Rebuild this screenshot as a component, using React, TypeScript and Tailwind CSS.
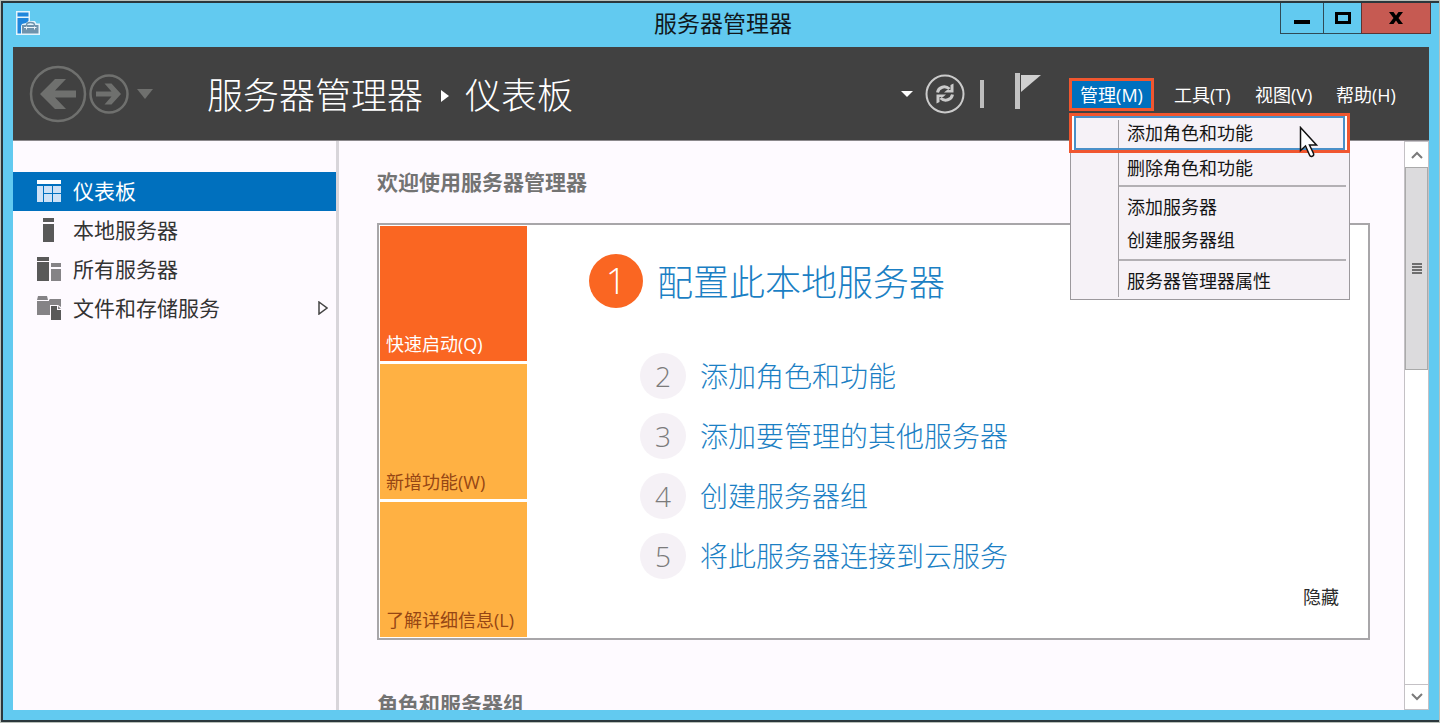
import React, { useState } from "react";

const navItems = [
  { label: "仪表板", icon: <DashboardIcon /> },
  { label: "本地服务器", icon: <LocalServerIcon /> },
  { label: "所有服务器", icon: <AllServersIcon /> },
  { label: "文件和存储服务", icon: <StorageIcon />, expandable: true },
];

const tiles = [
  { label: "快速启动(Q)", className: "bg-[#fa6622] text-white" },
  { label: "新增功能(W)", className: "bg-[#ffb143] text-[#964614]" },
  { label: "了解详细信息(L)", className: "bg-[#ffb143] text-[#964614]" },
];

const steps = ["添加角色和功能", "添加要管理的其他服务器", "创建服务器组", "将此服务器连接到云服务"];

const menus = ["工具(T)", "视图(V)", "帮助(H)"];

function AppIcon() {
  return (
    <svg width="24" height="24" viewBox="0 0 24 24">
      <path d="M0 0h14v10h5l1.500 2.500H24V24H0z" fill="#e4f4fc" />
      <rect x="1.500" y="1.500" width="11" height="4" fill="#1f86dc" />
      <path d="M1.500 7h11v3L10 12l-4 1-1 2v7.500H1.500z" fill="#1f86dc" />
      <path d="M6 14h16.500v8.500H6z" fill="#6f93ac" />
      <path d="M10.500 14c0-3.500 8-3.500 8 0" fill="none" stroke="#6f93ac" strokeWidth="1.500" />
      <path d="M8 16.500h12.500M10.500 15.500v3M18.500 15.500v3" stroke="#eef5f9" />
    </svg>
  );
}

function DashboardIcon() {
  return (
    <svg width="24" height="24" viewBox="0 0 24 24">
      <path d="M0 1h24v4H0z" fill="#fff" />
      <path d="M0 7h6v16H0zM7 7h8v7H7zM16 7h8v7h-8zM7 15h8v8H7zM16 15h8v8h-8z" fill="#cfe2f6" />
    </svg>
  );
}

function LocalServerIcon() {
  return (
    <svg width="24" height="24" viewBox="0 0 24 24" fill="#595959">
      <path d="M6 0h11v4H6zM6 6h11v18H6z" />
    </svg>
  );
}

function AllServersIcon() {
  return (
    <svg width="24" height="24" viewBox="0 0 24 24">
      <path d="M0 0h12v4H0zM0 5h12v19H0z" fill="#595959" />
      <path d="M14 6h10v4H14zM14 12h10v12H14z" fill="#858386" />
    </svg>
  );
}

function StorageIcon() {
  return (
    <svg width="24" height="24" viewBox="0 0 24 24">
      <path d="M1 0h9l1 4H0zM0 5h12v14H0z" fill="#858386" />
      <path d="M13 3h11v8l-3-2h-8v10h-1V4z" fill="#858386" />
      <path d="M14 10h6v4h4v10H14z" fill="#595959" />
      <path d="M21 10l3 3h-3z" fill="#858386" />
    </svg>
  );
}

function BackIcon() {
  return (
    <svg width="58" height="58" viewBox="0 0 58 58">
      <circle cx="29" cy="29" r="27" fill="none" stroke="#6f706e" strokeWidth="2.500" />
      <path d="M11 29 26 14h11L26 25.500h21v7H26L37 44H26z" fill="#6f706e" />
    </svg>
  );
}

function ForwardIcon() {
  return (
    <svg width="40" height="40" viewBox="0 0 40 40">
      <circle cx="20" cy="20" r="18.500" fill="none" stroke="#6f706e" strokeWidth="2.500" />
      <path d="M32 20 22.500 30.500h-7l7-8H7v-5h15.500l-7-8h7z" fill="#6f706e" />
    </svg>
  );
}

function RefreshIcon() {
  return (
    <svg width="40" height="40" viewBox="0 0 40 40" fill="none" stroke="#cbcbcb">
      <circle cx="20" cy="20" r="18.500" strokeWidth="2" />
      <path d="M12.500 18.500c1-5.500 7.500-7.500 12-3.500" strokeWidth="3" />
      <path d="M27.500 20.500c-1 5.500-7.500 7.500-12 3.500" strokeWidth="3" />
      <path d="M28.500 9.500v9H19l3-2.500h3.500V11zM11.500 29.500v-9H21L18 23h-3.500v5z" fill="#cbcbcb" stroke="none" />
    </svg>
  );
}

function FlagIcon() {
  return (
    <svg width="26" height="42" viewBox="0 0 26 42">
      <path d="M0 0h5v36H0z" fill="#c2c2c2" />
      <path d="M6 2h20L6 19z" fill="#d0d0d0" />
    </svg>
  );
}

function Cursor() {
  return (
    <svg className="absolute top-2.5 right-7 z-10" width="20" height="34" viewBox="0 0 20 34">
      <path
        d="M1.500 1.500v23l5-4.500 4 9c1 2.500 5 1.500 4-1.500l-4-8.500h7z"
        fill="#fff"
        stroke="#111"
        strokeWidth="1.500"
      />
    </svg>
  );
}

function TitleBar() {
  return (
    <div className="grid h-11 shrink-0 grid-cols-[1fr_auto_1fr] pr-2 pl-3">
      <div className="pl-px pt-2">
        <AppIcon />
      </div>
      <h1 className="pt-1.5 text-[23px] leading-7 text-[#10181c]">服务器管理器</h1>
      <div className="flex h-[31px] justify-end">
        <button aria-label="最小化" className="flex w-[43px] items-center justify-center border border-t-0 border-r-0 border-[#2f4a56]">
          <span className="mt-2 h-1 w-4 bg-black" />
        </button>
        <button aria-label="最大化" className="flex w-[38px] items-center justify-center border border-t-0 border-r-0 border-[#2f4a56]">
          <span className="h-3 w-4 border-[3px] border-black" />
        </button>
        <button aria-label="关闭" className="flex w-[70px] items-center justify-center border border-t-0 border-[#5a3434] bg-[#c65a52]">
          <svg width="14" height="12" viewBox="0 0 14 12">
            <path d="M0 0h4.500L7 3.500 9.500 0H14L9.500 6l4.500 6H9.500L7 8.500 4.500 12H0l4.500-6z" />
          </svg>
        </button>
      </div>
    </div>
  );
}

function MenuItem({ label }: { label: string }) {
  return (
    <li className="flex h-[33px]">
      <span className="w-12 shrink-0 border-r border-[#a3a0a4]" />
      <button className="flex-1 pl-2 text-left">{label}</button>
    </li>
  );
}

function MenuSeparator() {
  return (
    <li className="flex h-2 items-center pr-[3px]">
      <span className="h-2 w-12 shrink-0 border-r border-[#a3a0a4]" />
      <span className="h-0.5 flex-1 bg-[#b3b0b4]" />
    </li>
  );
}

function ManageMenu() {
  return (
    <ul className="absolute top-[35px] left-px z-10 w-[280px] border border-[#9c999d] bg-[#f6f2f7] pb-0.5 text-lg leading-6 text-[#151515]">
      <li className="relative -mt-px -mr-px -ml-0.5 border-[3px] border-[#f0562f] bg-white px-0.5">
        <button className="flex h-[34px] w-full border-2 border-[#4a90c8] bg-[#f6f2f7] text-left">
          <span className="mt-0.5 w-[43px] self-stretch border-r border-[#a3a0a4]" />
          <span className="self-center pl-2">添加角色和功能</span>
        </button>
        <Cursor />
      </li>
      <li className="flex h-[29px]">
        <span className="w-12 shrink-0 border-r border-[#a3a0a4]" />
        <button className="flex-1 pl-2 text-left">删除角色和功能</button>
      </li>
      <MenuSeparator />
      <MenuItem label="添加服务器" />
      <MenuItem label="创建服务器组" />
      <MenuSeparator />
      <MenuItem label="服务器管理器属性" />
    </ul>
  );
}

function Header() {
  const [menuOpen, setMenuOpen] = useState(true);

  return (
    <header className="flex h-[94px] shrink-0 items-center justify-between border-b border-[#8b888c] bg-[#414141] pr-8 pl-4 text-white">
      <div className="flex items-center">
        <button aria-label="后退">
          <BackIcon />
        </button>
        <button aria-label="前进" className="ml-0.5">
          <ForwardIcon />
        </button>
        <button aria-label="历史记录" className="ml-2">
          <svg width="16" height="10" viewBox="0 0 16 10">
            <path d="M0 0h16L8 10z" fill="#6f706e" />
          </svg>
        </button>
        <div className="ml-[54px] flex items-center pt-1 text-4xl leading-[48px] font-light">
          <span>服务器管理器</span>
          <svg className="mr-4 ml-[18px]" width="8" height="12" viewBox="0 0 8 12">
            <path d="M0 0l8 6-8 6z" fill="#fff" />
          </svg>
          <span>仪表板</span>
        </div>
      </div>
      <div className="flex items-center">
        <button aria-label="更多">
          <svg width="12" height="6" viewBox="0 0 12 6">
            <path d="M0 0h12L6 6z" fill="#fff" />
          </svg>
        </button>
        <button aria-label="刷新" className="ml-3">
          <RefreshIcon />
        </button>
        <span className="ml-[15px] h-7 w-1 bg-[#bdbdbd]" />
        <button aria-label="通知" className="ml-[31px]">
          <FlagIcon />
        </button>
        <nav className="ml-7 flex items-center gap-5 pt-0.5 text-lg leading-6">
          <div className="relative">
            <button
              className="h-[33px] w-[85px] border-[3px] border-[#f0562f] bg-[#0070be]"
              onClick={() => setMenuOpen(!menuOpen)}
            >
              管理(M)
            </button>
            {menuOpen && <ManageMenu />}
          </div>
          {menus.map((menu) => (
            <button key={menu} className="w-[61px] text-left">
              {menu}
            </button>
          ))}
        </nav>
      </div>
    </header>
  );
}

function Sidebar() {
  return (
    <nav className="w-[326px] shrink-0 border-r-[3px] border-[#d8d5da] pt-[31px]">
      {navItems.map((item, index) => (
        <a
          key={item.label}
          href="#"
          className={`flex h-[39px] items-center pr-2 pb-0.5 pl-6 text-[21px] leading-7 ${
            index === 0 ? "bg-[#0070be] text-white" : "text-[#333]"
          }`}
        >
          {item.icon}
          <span className="ml-3 flex-1">{item.label}</span>
          {item.expandable && (
            <svg width="10" height="14" viewBox="0 0 10 14">
              <path d="M1 1l8 6-8 6z" fill="none" stroke="#444" strokeWidth="1.500" />
            </svg>
          )}
        </a>
      ))}
    </nav>
  );
}

function WelcomePanel() {
  return (
    <section className="mt-[27px] flex border-2 border-[#a8a6a9] bg-white p-px">
      <div className="flex w-[147px] shrink-0 flex-col gap-[3px]">
        {tiles.map((tile) => (
          <button
            key={tile.label}
            className={`flex h-[135px] items-end px-1.5 pb-[5px] text-lg leading-6 whitespace-nowrap ${tile.className}`}
          >
            {tile.label}
          </button>
        ))}
      </div>
      <div className="flex flex-1 flex-col pt-7 pl-[62px]">
        <a href="#" className="flex items-center gap-3.5 text-4xl leading-[54px] font-light text-[#1b7fc4]">
          <span className="w-[54px] rounded-full bg-[#fa6622] text-center text-white">1</span>
          <span className="-mb-1">配置此本地服务器</span>
        </a>
        <ol className="mt-[45px] flex flex-col gap-3.5 pl-[51px]">
          {steps.map((step, index) => (
            <li key={step}>
              <a href="#" className="flex items-center gap-3.5 text-[28px] leading-[46px] font-light text-[#1b7fc4]">
                <span className="w-[46px] rounded-full bg-[#f5f1f6] text-center text-[#7b7b7b]">{index + 2}</span>
                {step}
              </a>
            </li>
          ))}
        </ol>
        <button className="mt-1.5 mr-7 self-end text-lg leading-6 text-[#2b2b2b]">隐藏</button>
      </div>
    </section>
  );
}

function ScrollBar() {
  return (
    <div className="flex w-[25px] shrink-0 flex-col border border-[#c4c1c5] bg-white">
      <button aria-label="向上滚动" className="flex h-[25px] items-center justify-center">
        <svg width="12" height="8" viewBox="0 0 12 8">
          <path d="M1 7l5-5 5 5" fill="none" stroke="#7a7a7a" strokeWidth="2" />
        </svg>
      </button>
      <div className="flex h-[203px] flex-col items-center justify-center gap-px border border-[#aaa] bg-[#dcdbdd]">
        <span className="h-0.5 w-2.5 bg-[#6e6e6e]" />
        <span className="h-0.5 w-2.5 bg-[#6e6e6e]" />
        <span className="h-0.5 w-2.5 bg-[#6e6e6e]" />
        <span className="h-0.5 w-2.5 bg-[#6e6e6e]" />
      </div>
      <button aria-label="向下滚动" className="mt-auto flex h-[25px] items-center justify-center border-t border-[#c4c1c5]">
        <svg width="12" height="8" viewBox="0 0 12 8">
          <path d="M1 1l5 5 5-5" fill="none" stroke="#7a7a7a" strokeWidth="2" />
        </svg>
      </button>
    </div>
  );
}

export default function App() {
  return (
    <div className="h-screen bg-[#b9c0ba] p-px font-['Open_Sans','Noto_Sans_CJK_SC',sans-serif]">
      <div className="flex h-full flex-col border-y-2 border-l-2 border-[#2b373c] bg-[#62caf0]">
        <TitleBar />
        <div className="mx-2.5 mb-2.5 flex min-h-0 flex-1 flex-col">
          <Header />
          <div className="flex min-h-0 flex-1 bg-[#fefaff]">
            <Sidebar />
            <main className="min-w-0 flex-1 overflow-hidden pt-[27px] pr-[34px] pl-[38px]">
              <h2 className="text-[21px] leading-7 font-bold text-[#737373]">欢迎使用服务器管理器</h2>
              <WelcomePanel />
              <h2 className="mt-[50px] text-[21px] leading-7 font-bold text-[#737373]">角色和服务器组</h2>
            </main>
            <ScrollBar />
          </div>
        </div>
      </div>
    </div>
  );
}
